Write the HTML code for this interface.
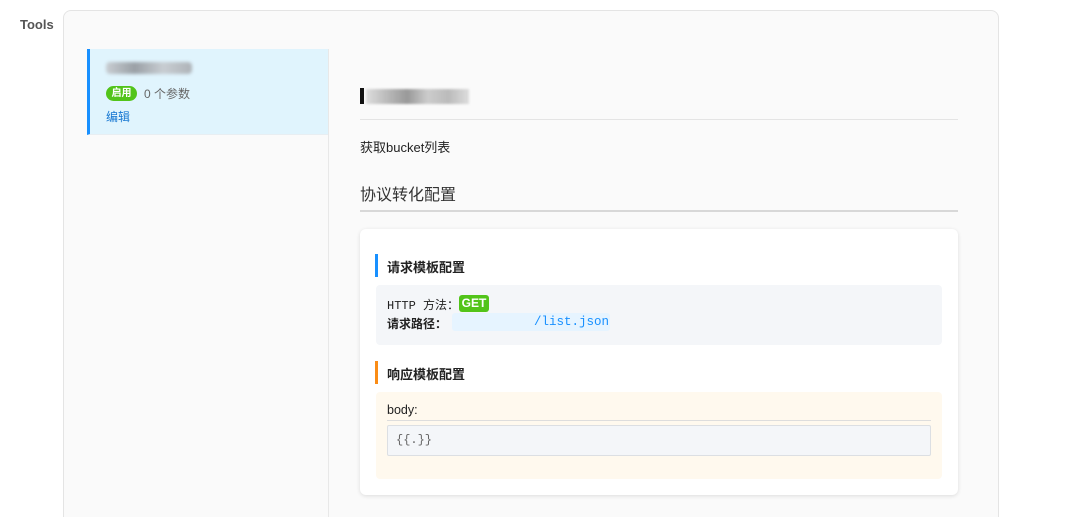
<!DOCTYPE html>
<html><head><meta charset="utf-8"><style>
*{box-sizing:border-box;margin:0;padding:0}
html,body{width:1080px;height:517px;overflow:hidden}
body{background:#fff;font-family:"Liberation Sans","Noto Sans CJK SC",sans-serif;position:relative;color:#222}
.abs{position:absolute}
.t{font-size:13px}
</style></head><body>
<div class="abs" style="left:20px;top:17px;font-size:13px;font-weight:bold;color:#555">Tools</div>
<div class="abs" style="left:63px;top:10px;width:936px;height:507px;border:1px solid #e4e4e4;border-bottom:none;border-radius:8px 8px 0 0;background:#fafafa"></div>
<div class="abs" style="left:328px;top:49px;width:1px;height:468px;background:#e8e8e8"></div>
<div class="abs" style="left:87px;top:49px;width:241px;height:86px;background:#e0f4fd;border-left:3px solid #1890ff;border-bottom:1px solid #e8eef2"></div>
<div class="abs" style="left:106px;top:62px;width:86px;height:12px;background:linear-gradient(90deg,#c8cdd2,#9aa0a6,#c8cdd2,#aeb3b8);border-radius:4px;filter:blur(1.5px)"></div>
<div class="abs" style="left:106px;top:86px;width:31px;height:15px;background:#52c41a;border-radius:8px;color:#fff;font-size:10px;font-weight:bold;text-align:center;line-height:15px">启用</div>
<div class="abs t" style="left:144px;top:85px;color:#666;font-size:12px">0 个参数</div>
<div class="abs" style="left:106px;top:108px;color:#1677d2;font-size:12px">编辑</div>
<div class="abs" style="left:360px;top:88px;width:4px;height:16px;background:#111"></div>
<div class="abs" style="left:366px;top:89px;width:103px;height:15px;background:linear-gradient(90deg,#ddd,#bbb,#999,#ccc,#bbb,#ddd);filter:blur(1px)"></div>
<div class="abs" style="left:360px;top:119px;width:598px;height:1px;background:#e4e4e4"></div>
<div class="abs" style="left:360px;top:137px;font-size:13px">获取bucket列表</div>
<div class="abs" style="left:360px;top:181px;font-size:16px;color:#333">协议转化配置</div>
<div class="abs" style="left:360px;top:210px;width:598px;height:2px;background:#d8d8d8"></div>
<div class="abs" style="left:360px;top:229px;width:598px;height:266px;background:#fff;border-radius:6px;box-shadow:0 1px 4px rgba(0,0,0,.12)"></div>
<div class="abs" style="left:375px;top:254px;width:3px;height:23px;background:#1890ff"></div>
<div class="abs" style="left:387px;top:257px;font-size:13px;font-weight:bold">请求模板配置</div>
<div class="abs" style="left:376px;top:285px;width:566px;height:60px;background:#f4f6f9;border-radius:4px"></div>
<div class="abs" style="left:387px;top:296px;font-size:12px;font-family:'Liberation Mono','Noto Sans CJK SC',monospace">HTTP 方法：</div>
<div class="abs" style="left:459px;top:295px;width:30px;height:17px;background:#52c41a;border-radius:3px;color:#fff;font-size:12px;font-weight:bold;text-align:center;line-height:17px">GET</div>
<div class="abs" style="left:387px;top:315px;font-size:12px;font-weight:bold">请求路径：</div>
<div class="abs" style="left:452px;top:313px;width:158px;height:18px;background:#e6f4ff;border-radius:3px"></div>
<div class="abs" style="left:534px;top:315px;font-size:12.5px;color:#1890ff;font-family:'Liberation Mono',monospace">/list.json</div>
<div class="abs" style="left:375px;top:361px;width:3px;height:23px;background:#fa8c16"></div>
<div class="abs" style="left:387px;top:364px;font-size:13px;font-weight:bold">响应模板配置</div>
<div class="abs" style="left:376px;top:392px;width:566px;height:87px;background:#fff9ee;border-radius:4px"></div>
<div class="abs" style="left:387px;top:403px;font-size:12.5px">body:</div>
<div class="abs" style="left:387px;top:420px;width:544px;height:1px;background:#ddd"></div>
<div class="abs" style="left:387px;top:425px;width:544px;height:31px;background:#f4f6f9;border:1px solid #dcdfe3;border-radius:2px;font-family:'Liberation Mono',monospace;font-size:12px;color:#666;padding:7px 8px">{{.}}</div>
</body></html>
